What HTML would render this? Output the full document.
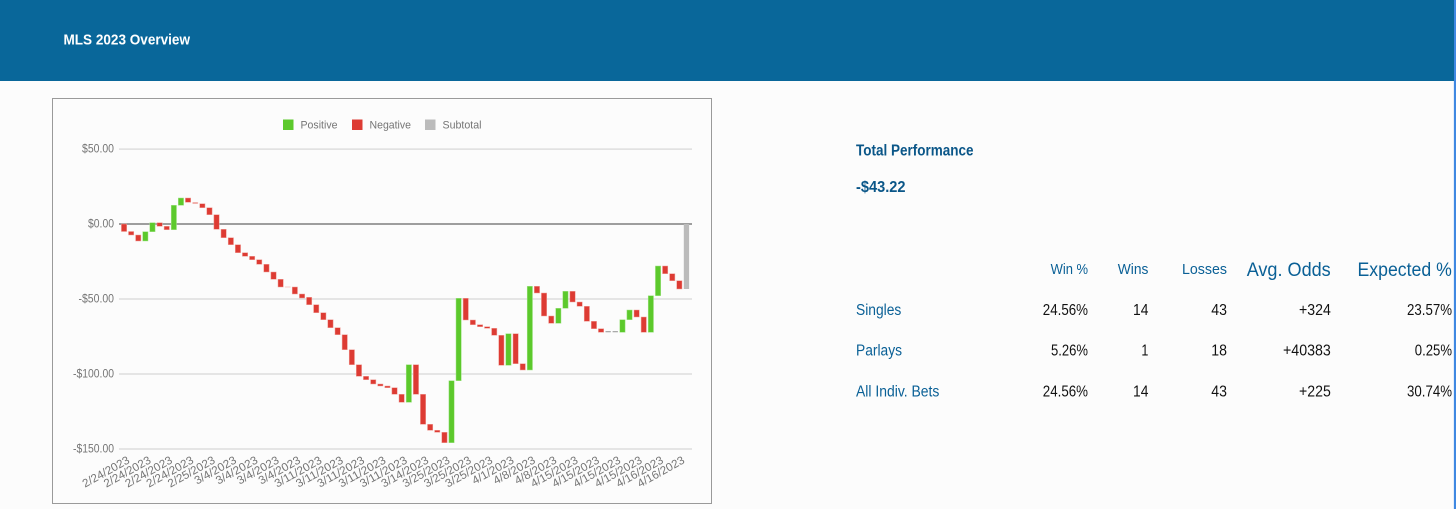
<!DOCTYPE html>
<html lang="en">
<head>
<meta charset="utf-8">
<title>MLS 2023 Overview</title>
<style>
html,body{margin:0;padding:0;width:1456px;height:509px;overflow:hidden;background:#fcfcfc}
svg{display:block;font-family:"Liberation Sans",sans-serif}
.r rect{fill:#dd3b33;stroke:#f0a09a;stroke-width:.5}
.g rect{fill:#5cc92c;stroke:#a5e48a;stroke-width:.5}
.ax{fill:#757575;font-size:11.5px}
.lg{fill:#757575;font-size:11px}
.h{fill:#0a6096;font-size:15px}
.hl{fill:#0a6096;font-size:19px}
.v{fill:#111;font-size:15.5px}
.n{fill:#0a6096;font-size:15.5px}
.b{fill:#0a5688;font-size:15.5px;font-weight:bold}
</style>
</head>
<body>
<svg width="1456" height="509" viewBox="0 0 1456 509" xmlns="http://www.w3.org/2000/svg">
<rect width="1456" height="509" fill="#fcfcfc"/>
<rect width="1456" height="81" fill="#09679a"/>
<text x="63.5" y="44.7" fill="#fff" font-size="15" font-weight="bold" textLength="126.5" lengthAdjust="spacingAndGlyphs">MLS 2023 Overview</text>
<rect x="1453" y="81" width="1" height="428" fill="#e3eefb"/>
<rect x="1454" y="0" width="2" height="509" fill="#3f88e2"/>

<rect x="52.5" y="98.5" width="659" height="405" fill="#fcfcfc" stroke="#9a9a9a" stroke-width="1"/>

<rect x="283" y="119.5" width="10.5" height="10.5" fill="#5cc92c"/>
<text class="lg" x="300.5" y="128.5" textLength="37" lengthAdjust="spacingAndGlyphs">Positive</text>
<rect x="352" y="119.5" width="10.5" height="10.5" fill="#dd3b33"/>
<text class="lg" x="369.5" y="128.5" textLength="41.5" lengthAdjust="spacingAndGlyphs">Negative</text>
<rect x="425" y="119.5" width="10.5" height="10.5" fill="#bbbbbb"/>
<text class="lg" x="442.5" y="128.5" textLength="39" lengthAdjust="spacingAndGlyphs">Subtotal</text>

<g fill="#d6d6d6">
<rect x="119" y="148.5" width="573" height="1.2"/>
<rect x="119" y="298.4" width="573" height="1.2"/>
<rect x="119" y="373.4" width="573" height="1.2"/>
<rect x="119" y="448.4" width="573" height="1.2"/>
</g>
<rect x="119" y="223.3" width="573" height="1.4" fill="#777"/>

<g class="ax" text-anchor="end">
<text x="114" y="152.3" textLength="32" lengthAdjust="spacingAndGlyphs">$50.00</text>
<text x="114" y="227.3" textLength="26" lengthAdjust="spacingAndGlyphs">$0.00</text>
<text x="114" y="302.3" textLength="35.5" lengthAdjust="spacingAndGlyphs">-$50.00</text>
<text x="114" y="377.3" textLength="41" lengthAdjust="spacingAndGlyphs">-$100.00</text>
<text x="114" y="452.3" textLength="41" lengthAdjust="spacingAndGlyphs">-$150.00</text>
</g>

<g class="r">
<rect x="121.4" y="224" width="5.3" height="7.5"/>
<rect x="128.5" y="231.5" width="5.3" height="3.5"/>
<rect x="135.6" y="235" width="5.3" height="6"/>
<rect x="157" y="222.7" width="5.3" height="3.6"/>
<rect x="164.1" y="226.3" width="5.3" height="3.4"/>
<rect x="185.4" y="198" width="5.3" height="4.3"/>
<rect x="192.6" y="202.3" width="5.3" height="1.4" opacity=".55"/>
<rect x="199.7" y="203.7" width="5.3" height="4"/>
<rect x="206.8" y="207.7" width="5.3" height="7"/>
<rect x="213.9" y="214.7" width="5.3" height="14.6"/>
<rect x="221" y="229.3" width="5.3" height="8.4"/>
<rect x="228.2" y="237.7" width="5.3" height="7"/>
<rect x="235.3" y="244.7" width="5.3" height="8"/>
<rect x="242.4" y="252.7" width="5.3" height="3.6"/>
<rect x="249.5" y="256.3" width="5.3" height="3.4"/>
<rect x="256.6" y="259.7" width="5.3" height="4.6"/>
<rect x="263.8" y="264.3" width="5.3" height="7.7"/>
<rect x="270.9" y="272" width="5.3" height="7.3"/>
<rect x="278" y="279.3" width="5.3" height="7.7"/>
<rect x="285.1" y="286.6" width="5.3" height=".8" opacity=".35"/>
<rect x="292.2" y="287" width="5.3" height="7"/>
<rect x="299.4" y="294" width="5.3" height="4"/>
<rect x="306.5" y="297.3" width="5.3" height="7.4"/>
<rect x="313.6" y="304.7" width="5.3" height="8"/>
<rect x="320.7" y="312.7" width="5.3" height="7"/>
<rect x="327.8" y="319.7" width="5.3" height="8"/>
<rect x="335" y="327.7" width="5.3" height="7"/>
<rect x="342.1" y="334.7" width="5.3" height="15"/>
<rect x="349.2" y="349.7" width="5.3" height="15"/>
<rect x="356.3" y="364.7" width="5.3" height="11.6"/>
<rect x="363.4" y="376.3" width="5.3" height="3.4"/>
<rect x="370.6" y="379.7" width="5.3" height="4.3"/>
<rect x="377.7" y="384" width="5.3" height="2"/>
<rect x="384.8" y="386" width="5.3" height="1.7"/>
<rect x="391.9" y="387.7" width="5.3" height="6.6"/>
<rect x="399" y="394.3" width="5.3" height="8"/>
<rect x="413.3" y="364.7" width="5.3" height="29.6"/>
<rect x="420.4" y="394.3" width="5.3" height="30"/>
<rect x="427.5" y="424.3" width="5.3" height="6"/>
<rect x="434.6" y="430.3" width="5.3" height="2"/>
<rect x="441.8" y="432.3" width="5.3" height="10.4"/>
<rect x="463.1" y="298.3" width="5.3" height="21.7"/>
<rect x="470.2" y="320" width="5.3" height="4.7"/>
<rect x="477.4" y="324.7" width="5.3" height="2"/>
<rect x="484.5" y="326.7" width="5.3" height="1.6"/>
<rect x="491.6" y="328.3" width="5.3" height="7"/>
<rect x="498.7" y="335.3" width="5.3" height="30"/>
<rect x="513" y="333.7" width="5.3" height="30"/>
<rect x="520.1" y="363.7" width="5.3" height="6.3"/>
<rect x="534.3" y="286.3" width="5.3" height="6.7"/>
<rect x="541.4" y="293" width="5.3" height="23"/>
<rect x="548.6" y="316" width="5.3" height="7.3"/>
<rect x="569.9" y="291.3" width="5.3" height="10.7"/>
<rect x="577" y="302" width="5.3" height="4.3"/>
<rect x="584.2" y="306.3" width="5.3" height="15"/>
<rect x="591.3" y="321.3" width="5.3" height="7.4"/>
<rect x="598.4" y="328.7" width="5.3" height="3.6"/>
<rect x="634" y="310" width="5.3" height="7"/>
<rect x="641.1" y="317" width="5.3" height="15.3"/>
<rect x="662.5" y="266" width="5.3" height="7.7"/>
<rect x="669.6" y="273.7" width="5.3" height="7"/>
<rect x="676.7" y="280.7" width="5.3" height="8.3"/>
</g>

<g class="g">
<rect x="142.7" y="231.7" width="5.3" height="9.3"/>
<rect x="149.8" y="222.7" width="5.3" height="9"/>
<rect x="171.2" y="205.3" width="5.3" height="24.4"/>
<rect x="178.3" y="198" width="5.3" height="7.3"/>
<rect x="406.2" y="364.7" width="5.3" height="37.6"/>
<rect x="448.9" y="380.7" width="5.3" height="62"/>
<rect x="456" y="298.3" width="5.3" height="82.4"/>
<rect x="505.8" y="333.7" width="5.3" height="31.6"/>
<rect x="527.2" y="286.3" width="5.3" height="83.7"/>
<rect x="555.7" y="308.3" width="5.3" height="15"/>
<rect x="562.8" y="291.3" width="5.3" height="17"/>
<rect x="619.8" y="319.7" width="5.3" height="12.6"/>
<rect x="626.9" y="310" width="5.3" height="9.7"/>
<rect x="648.2" y="295.7" width="5.3" height="36.6"/>
<rect x="655.4" y="266" width="5.3" height="29.7"/>
</g>

<rect x="605.5" y="331" width="5.3" height="1.3" fill="#aaa"/>
<rect x="612.6" y="331" width="5.3" height="1.3" fill="#aaa"/>
<rect x="683.8" y="224" width="5.3" height="65" fill="#bbbbbb"/>

<g class="ax" transform="translate(-1.5 .5)">
<text transform="translate(132 462) rotate(-29)" text-anchor="end" textLength="52" lengthAdjust="spacingAndGlyphs">2/24/2023</text>
<text transform="translate(153.3 462) rotate(-29)" text-anchor="end" textLength="52" lengthAdjust="spacingAndGlyphs">2/24/2023</text>
<text transform="translate(174.7 462) rotate(-29)" text-anchor="end" textLength="52" lengthAdjust="spacingAndGlyphs">2/24/2023</text>
<text transform="translate(196 462) rotate(-29)" text-anchor="end" textLength="52" lengthAdjust="spacingAndGlyphs">2/24/2023</text>
<text transform="translate(217.4 462) rotate(-29)" text-anchor="end" textLength="52" lengthAdjust="spacingAndGlyphs">2/25/2023</text>
<text transform="translate(238.7 462) rotate(-29)" text-anchor="end" textLength="46" lengthAdjust="spacingAndGlyphs">3/4/2023</text>
<text transform="translate(260.1 462) rotate(-29)" text-anchor="end" textLength="46" lengthAdjust="spacingAndGlyphs">3/4/2023</text>
<text transform="translate(281.4 462) rotate(-29)" text-anchor="end" textLength="46" lengthAdjust="spacingAndGlyphs">3/4/2023</text>
<text transform="translate(302.8 462) rotate(-29)" text-anchor="end" textLength="46" lengthAdjust="spacingAndGlyphs">3/4/2023</text>
<text transform="translate(324.1 462) rotate(-29)" text-anchor="end" textLength="52" lengthAdjust="spacingAndGlyphs">3/11/2023</text>
<text transform="translate(345.5 462) rotate(-29)" text-anchor="end" textLength="52" lengthAdjust="spacingAndGlyphs">3/11/2023</text>
<text transform="translate(366.8 462) rotate(-29)" text-anchor="end" textLength="52" lengthAdjust="spacingAndGlyphs">3/11/2023</text>
<text transform="translate(388.2 462) rotate(-29)" text-anchor="end" textLength="52" lengthAdjust="spacingAndGlyphs">3/11/2023</text>
<text transform="translate(409.5 462) rotate(-29)" text-anchor="end" textLength="52" lengthAdjust="spacingAndGlyphs">3/11/2023</text>
<text transform="translate(430.9 462) rotate(-29)" text-anchor="end" textLength="52" lengthAdjust="spacingAndGlyphs">3/14/2023</text>
<text transform="translate(452.2 462) rotate(-29)" text-anchor="end" textLength="52" lengthAdjust="spacingAndGlyphs">3/25/2023</text>
<text transform="translate(473.6 462) rotate(-29)" text-anchor="end" textLength="52" lengthAdjust="spacingAndGlyphs">3/25/2023</text>
<text transform="translate(494.9 462) rotate(-29)" text-anchor="end" textLength="52" lengthAdjust="spacingAndGlyphs">3/25/2023</text>
<text transform="translate(516.3 462) rotate(-29)" text-anchor="end" textLength="46" lengthAdjust="spacingAndGlyphs">4/1/2023</text>
<text transform="translate(537.6 462) rotate(-29)" text-anchor="end" textLength="46" lengthAdjust="spacingAndGlyphs">4/8/2023</text>
<text transform="translate(559 462) rotate(-29)" text-anchor="end" textLength="46" lengthAdjust="spacingAndGlyphs">4/8/2023</text>
<text transform="translate(580.3 462) rotate(-29)" text-anchor="end" textLength="52" lengthAdjust="spacingAndGlyphs">4/15/2023</text>
<text transform="translate(601.7 462) rotate(-29)" text-anchor="end" textLength="52" lengthAdjust="spacingAndGlyphs">4/15/2023</text>
<text transform="translate(623 462) rotate(-29)" text-anchor="end" textLength="52" lengthAdjust="spacingAndGlyphs">4/15/2023</text>
<text transform="translate(644.4 462) rotate(-29)" text-anchor="end" textLength="52" lengthAdjust="spacingAndGlyphs">4/15/2023</text>
<text transform="translate(665.7 462) rotate(-29)" text-anchor="end" textLength="52" lengthAdjust="spacingAndGlyphs">4/16/2023</text>
<text transform="translate(687 462) rotate(-29)" text-anchor="end" textLength="52" lengthAdjust="spacingAndGlyphs">4/16/2023</text>
</g>

<text class="b" x="856" y="155.3" textLength="117.5" lengthAdjust="spacingAndGlyphs">Total Performance</text>
<text class="b" x="856" y="192" textLength="49.5" lengthAdjust="spacingAndGlyphs">-$43.22</text>

<text class="h" x="1050.6" y="274" textLength="37.5" lengthAdjust="spacingAndGlyphs">Win %</text>
<text class="h" x="1117.8" y="274" textLength="30.6" lengthAdjust="spacingAndGlyphs">Wins</text>
<text class="h" x="1182" y="274" textLength="45" lengthAdjust="spacingAndGlyphs">Losses</text>
<text class="hl" x="1246.7" y="276" textLength="84" lengthAdjust="spacingAndGlyphs">Avg. Odds</text>
<text class="hl" x="1357.5" y="276" textLength="94.3" lengthAdjust="spacingAndGlyphs">Expected %</text>

<text class="n" x="856" y="315" textLength="45.3" lengthAdjust="spacingAndGlyphs">Singles</text>
<text class="v" x="1042.8" y="315" textLength="45.2" lengthAdjust="spacingAndGlyphs">24.56%</text>
<text class="v" x="1133" y="315" textLength="15.4" lengthAdjust="spacingAndGlyphs">14</text>
<text class="v" x="1211.3" y="315" textLength="15.7" lengthAdjust="spacingAndGlyphs">43</text>
<text class="v" x="1299" y="315" textLength="31.8" lengthAdjust="spacingAndGlyphs">+324</text>
<text class="v" x="1407" y="315" textLength="45" lengthAdjust="spacingAndGlyphs">23.57%</text>

<text class="n" x="856" y="355.7" textLength="46" lengthAdjust="spacingAndGlyphs">Parlays</text>
<text class="v" x="1051" y="355.7" textLength="37" lengthAdjust="spacingAndGlyphs">5.26%</text>
<text class="v" x="1141.4" y="355.7" textLength="7" lengthAdjust="spacingAndGlyphs">1</text>
<text class="v" x="1211.3" y="355.7" textLength="15.7" lengthAdjust="spacingAndGlyphs">18</text>
<text class="v" x="1283" y="355.7" textLength="47.8" lengthAdjust="spacingAndGlyphs">+40383</text>
<text class="v" x="1414.8" y="355.7" textLength="37.2" lengthAdjust="spacingAndGlyphs">0.25%</text>

<text class="n" x="856" y="396.3" textLength="83.4" lengthAdjust="spacingAndGlyphs">All Indiv. Bets</text>
<text class="v" x="1042.8" y="396.3" textLength="45.2" lengthAdjust="spacingAndGlyphs">24.56%</text>
<text class="v" x="1133" y="396.3" textLength="15.4" lengthAdjust="spacingAndGlyphs">14</text>
<text class="v" x="1211.3" y="396.3" textLength="15.7" lengthAdjust="spacingAndGlyphs">43</text>
<text class="v" x="1299" y="396.3" textLength="31.8" lengthAdjust="spacingAndGlyphs">+225</text>
<text class="v" x="1407" y="396.3" textLength="45" lengthAdjust="spacingAndGlyphs">30.74%</text>
</svg>
</body>
</html>
